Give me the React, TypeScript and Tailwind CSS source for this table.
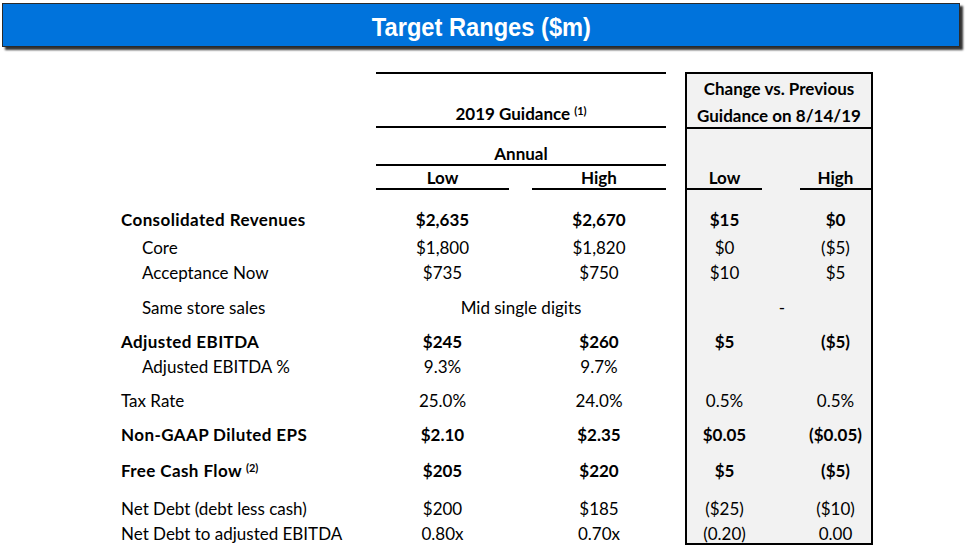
import * as React from "react";

type Row = {
  label: string;
  sup?: string;
  bold?: boolean;
  indent?: boolean;
  lo?: string;
  hi?: string;
  span?: string;
  clo?: string;
  chi?: string;
  cspan?: string;
  mt: string;
};

const rows: Row[] = [
  { label: "Consolidated Revenues", bold: true, lo: "$2,635", hi: "$2,670", clo: "$15", chi: "$0", mt: "mt-[20px]" },
  { label: "Core", indent: true, lo: "$1,800", hi: "$1,820", clo: "$0", chi: "($5)", mt: "mt-[8px]" },
  { label: "Acceptance Now", indent: true, lo: "$735", hi: "$750", clo: "$10", chi: "$5", mt: "mt-[5px]" },
  { label: "Same store sales", indent: true, span: "Mid single digits", cspan: "-", mt: "mt-[15px]" },
  { label: "Adjusted EBITDA", bold: true, lo: "$245", hi: "$260", clo: "$5", chi: "($5)", mt: "mt-[14px]" },
  { label: "Adjusted EBITDA %", indent: true, lo: "9.3%", hi: "9.7%", clo: "", chi: "", mt: "mt-[5px]" },
  { label: "Tax Rate", lo: "25.0%", hi: "24.0%", clo: "0.5%", chi: "0.5%", mt: "mt-[14px]" },
  { label: "Non-GAAP Diluted EPS", bold: true, lo: "$2.10", hi: "$2.35", clo: "$0.05", chi: "($0.05)", mt: "mt-[14px]" },
  { label: "Free Cash Flow", sup: "(2)", bold: true, lo: "$205", hi: "$220", clo: "$5", chi: "($5)", mt: "mt-[16px]" },
  { label: "Net Debt (debt less cash)", lo: "$200", hi: "$185", clo: "($25)", chi: "($10)", mt: "mt-[18px]" },
  { label: "Net Debt to adjusted EBITDA", lo: "0.80x", hi: "0.70x", clo: "(0.20)", chi: "0.00", mt: "mt-[5px]" },
];

function Sup({ children }: { children: React.ReactNode }) {
  return <sup className="ml-[4px] text-[11px] font-bold tracking-normal">{children}</sup>;
}

export default function App() {
  return (
    <div className="w-[967px] h-[556px] bg-white text-black font-['Lato',sans-serif] text-[17px] leading-[20px] overflow-hidden">
      {/* banner */}
      <div className="ml-[2px] mt-[3px] w-[958px] h-[44px] bg-[#0073dc] border border-[#2a2a2a] shadow-[3px_3px_2px_#333] flex items-center justify-center">
        <span className="inline-block pt-[3px] scale-x-[0.91] text-white font-bold text-[26px] font-['Liberation_Sans',sans-serif]">
          Target Ranges ($m)
        </span>
      </div>

      <div className="flex mt-[25px]">
        {/* labels */}
        <div className="w-[376px]">
          <div className="h-[118px]" />
          {rows.map((r) => (
            <div
              key={r.label}
              className={`${r.mt} h-[20px] whitespace-nowrap ${r.indent ? "pl-[142px]" : "pl-[121px]"} ${r.bold ? "font-bold tracking-[0.4px]" : ""}`}
            >
              {r.label}
              {r.sup && <Sup>{r.sup}</Sup>}
            </div>
          ))}
        </div>

        {/* 2019 guidance */}
        <div className="w-[290px]">
          <div className="border-t-2 border-black h-[56px] border-b-2 flex items-end justify-center pb-[2px] font-bold">
            <span>
              2019 Guidance<Sup>(1)</Sup>
            </span>
          </div>
          <div className="h-[38px] border-b-2 border-black flex items-end justify-center font-bold">Annual</div>
          <div className="flex h-[24px] font-bold">
            <div className="w-[133px] border-b-2 border-black flex items-end justify-center">Low</div>
            <div className="w-[23px]" />
            <div className="w-[134px] border-b-2 border-black flex items-end justify-center">High</div>
          </div>
          {rows.map((r) => (
            <div key={r.label} className={`${r.mt} h-[20px] flex ${r.bold ? "font-bold" : ""}`}>
              {r.span ? (
                <div className="w-full text-center">{r.span}</div>
              ) : (
                <>
                  <div className="w-[133px] text-center">{r.lo}</div>
                  <div className="w-[23px]" />
                  <div className="w-[134px] text-center">{r.hi}</div>
                </>
              )}
            </div>
          ))}
        </div>

        <div className="w-[19px]" />

        {/* change vs previous */}
        <div className="w-[188px] h-[473px] border-2 border-black bg-[#f2f2f2]">
          <div className="h-[55px] border-b-2 border-black pt-[1px] text-center font-bold leading-[27px]">
            <div>Change vs. Previous</div>
            <div>Guidance on 8/14/19</div>
          </div>
          <div className="flex h-[61px] font-bold">
            <div className="w-[75px] border-b-2 border-black flex items-end justify-center">Low</div>
            <div className="w-[38px]" />
            <div className="w-[71px] border-b-2 border-black flex items-end justify-center">High</div>
          </div>
          {rows.map((r) => (
            <div key={r.label} className={`${r.mt} h-[20px] flex ${r.bold ? "font-bold" : ""}`}>
              {r.cspan ? (
                <div className="w-full text-center pl-[6px]">{r.cspan}</div>
              ) : (
                <>
                  <div className="w-[75px] text-center">{r.clo}</div>
                  <div className="w-[38px]" />
                  <div className="w-[71px] text-center">{r.chi}</div>
                </>
              )}
            </div>
          ))}
        </div>
      </div>
    </div>
  );
}
